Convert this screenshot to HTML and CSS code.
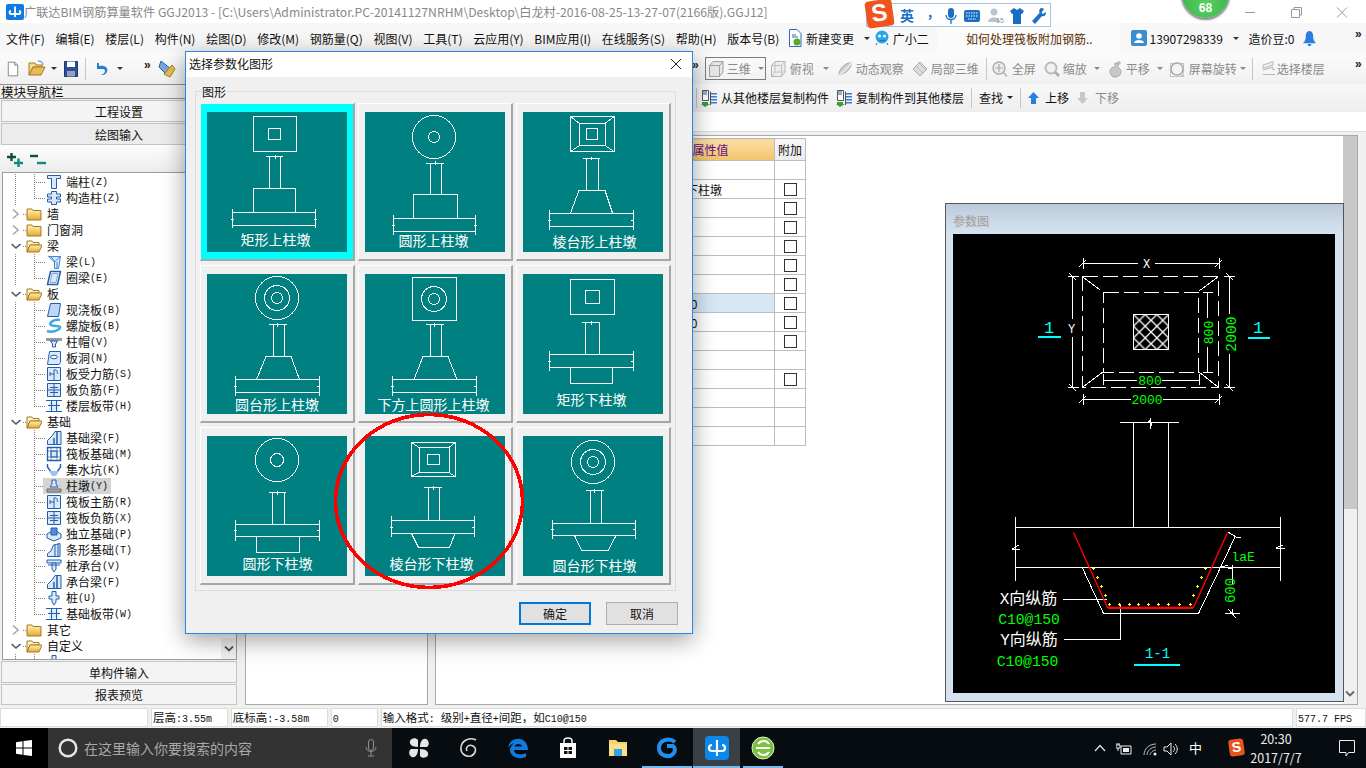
FILE: index.html
```html
<!DOCTYPE html>
<html lang="zh">
<head>
<meta charset="utf-8">
<title>广联达BIM钢筋算量软件 GGJ2013</title>
<link rel="stylesheet" href="styles.css">
</head>
<body>
<svg class="sprite" xmlns="http://www.w3.org/2000/svg">
  <defs>
    <linearGradient id="fold" x1="0" y1="0" x2="0" y2="1"><stop offset="0" stop-color="#fff3b8"/><stop offset="1" stop-color="#e2a92e"/></linearGradient>
  </defs>
  <symbol id="f-closed" viewBox="0 0 16 16"><path d="M1 3H6L7 4.500H15V14H1Z" fill="url(#fold)" stroke="#a87a1a"/></symbol>
  <symbol id="f-open" viewBox="0 0 16 16"><path d="M1 3H6L7 4.500H13V7H4L1 14Z" fill="#fff3c4" stroke="#a87a1a"/><path d="M1 14L4 7H16L13 14Z" fill="url(#fold)" stroke="#a87a1a"/></symbol>
  <symbol id="tw-r" viewBox="0 0 12 16"><path d="M3 3.500L8 8L3 12.500" fill="none" stroke="#a6a6a6" stroke-width="1.600"/></symbol>
  <symbol id="tw-d" viewBox="0 0 12 16"><path d="M1.500 6L6 10L10.500 6" fill="none" stroke="#555" stroke-width="1.600"/></symbol>
  <symbol id="i-duan" viewBox="0 0 16 16"><path d="M1.500 1.500H14.500V4.500H10.500V14.500H5.500V4.500H1.500Z" fill="#dbe8f9" stroke="#1f5fae"/></symbol>
  <symbol id="i-gz" viewBox="0 0 16 16"><path d="M5.500 1.500H10.500V4H14.500V7H10.500V9H14.500V12H10.500V14.500H5.500V12H1.500V9H5.500V7H1.500V4H5.500Z" fill="#dbe8f9" stroke="#1f5fae"/></symbol>
  <symbol id="i-liang" viewBox="0 0 16 16"><path d="M2.500 2.500H14.500L12.500 14.500H8.500V8Z" fill="#dbe8f9" stroke="#3f87d6"/><path d="M5 2.500L9 8M8.500 8L14.500 2.500M11 8V14" stroke="#3f87d6" fill="none"/></symbol>
  <symbol id="i-quan" viewBox="0 0 16 16"><path d="M4.500 1.500H14.500L11.500 14.500H1.500Z" fill="#fff" stroke="#1f5fae" stroke-width="1.500"/><path d="M6 3.500H12L10 12.500H4Z" fill="#dbe8f9" stroke="#7aa7dc"/></symbol>
  <symbol id="i-xj" viewBox="0 0 16 16"><path d="M4.500 1.500H14.500L12.500 14.500H1.500Z" fill="#bcd6f5" stroke="#1f5fae"/></symbol>
  <symbol id="i-lx" viewBox="0 0 16 16"><path d="M14 2C8 1 2 5 5 7C8 9 13 7 14 9C15 12 6 15 1 13" fill="none" stroke="#3fa6e8" stroke-width="2.500"/></symbol>
  <symbol id="i-zm" viewBox="0 0 16 16"><path d="M0 4H16V7H0Z" fill="#9a9a9a"/><path d="M4.500 7H11.500L9.500 10V13H6.500V10Z" fill="#dbe8f9" stroke="#1f5fae"/></symbol>
  <symbol id="i-bd" viewBox="0 0 16 16"><path d="M3.500 1.500H14.500V12.500L13 14.500H1.500Z" fill="#dbe8f9" stroke="#1f5fae"/><ellipse cx="8" cy="7" rx="3.500" ry="1.800" fill="#fff" stroke="#1f5fae"/></symbol>
  <symbol id="i-sl" viewBox="0 0 16 16"><path d="M1.500 1.500H14.500V14.500H1.500Z" fill="#dbe8f9" stroke="#1f5fae"/><path d="M8 4V14M4 8H8M4 6V10M8 4C11 3 12 6 11 8" fill="none" stroke="#1f5fae"/></symbol>
  <symbol id="i-fj" viewBox="0 0 16 16"><path d="M1.500 1.500H14.500V14.500H1.500Z" fill="#dbe8f9" stroke="#1f5fae"/><path d="M8 2V14M2 8H14M4 5.500H12M4 10.500H12" fill="none" stroke="#1f5fae"/></symbol>
  <symbol id="i-bdai" viewBox="0 0 16 16"><path d="M3 4H13V12H3Z" fill="#dbe8f9"/><path d="M0 2.500H16M0 13.500H16M2 7.500H14" stroke="#1f5fae" fill="none" stroke-width="1.200"/><path d="M5.500 2.500V13.500M10.500 2.500V13.500" stroke="#1f5fae" fill="none"/></symbol>
  <symbol id="i-jcl" viewBox="0 0 16 16"><path d="M1.500 14.500V10.500L6.500 5.500L9 1.500H15V14.500Z" fill="#dbe8f9" stroke="#1f5fae"/><path d="M8 14.500V8M11 1.500V14.500" stroke="#1f5fae" fill="none" stroke-width="1.500"/></symbol>
  <symbol id="i-fb" viewBox="0 0 16 16"><path d="M1.500 1.500H14.500V14.500H1.500Z" fill="#fff" stroke="#1f5fae" stroke-width="1.400"/><path d="M5 5H11V11H5Z" fill="#dbe8f9" stroke="#1f5fae"/><path d="M1 5H15M1 11H15M5 1V15M11 1V15" stroke="#1f5fae" fill="none" opacity=".6"/></symbol>
  <symbol id="i-jsk" viewBox="0 0 16 16"><path d="M1.500 2V5L5 10H11L14.500 5V2" fill="none" stroke="#1f5fae" stroke-width="1.400"/><path d="M3 9L6 14H10L13 9Z" fill="#9cc4ee"/></symbol>
  <symbol id="i-zd" viewBox="0 0 16 16"><path d="M6 2H10V6L12 9H4L6 6Z" fill="#dbe8f9" stroke="#1f5fae"/><path d="M1 11H15V14H1Z" fill="#a8a8a8" stroke="#666"/></symbol>
  <symbol id="i-dl" viewBox="0 0 16 16"><path d="M1 8L8 4L15 8V12L8 15L1 12Z" fill="#dbe8f9" stroke="#1f5fae"/><path d="M5 2H11V9H5Z" fill="#4f8fd8" stroke="#1f5fae"/></symbol>
  <symbol id="i-tx" viewBox="0 0 16 16"><path d="M1.500 14.500V11.500L5 9L7.500 3L14 1.500V14.500Z" fill="#dbe8f9" stroke="#1f5fae"/><path d="M9 3V14M12 2V14" stroke="#1f5fae" fill="none"/></symbol>
  <symbol id="i-zct" viewBox="0 0 16 16"><path d="M1 2H15V5H1Z" fill="#dbe8f9" stroke="#1f5fae"/><path d="M6 5H10V11L8 14L6 11Z" fill="#dbe8f9" stroke="#1f5fae"/><path d="M2 7H14" stroke="#1f5fae"/></symbol>
  <symbol id="i-z" viewBox="0 0 16 16"><path d="M6 1.500H10V6H13V9H10V12L8 15L6 12V9H3V6H6Z" fill="#dbe8f9" stroke="#1f5fae"/></symbol>
  <symbol id="g-cube" viewBox="0 0 16 18"><path d="M1.500 5.500L5 1.500H15V12L11.500 16.500H1.500Z" fill="#e6e6e6" stroke="#a0a0a0"/><path d="M1.500 5.500H11.500V16.500M11.500 5.500L15 1.500" fill="none" stroke="#a0a0a0"/></symbol>
  <symbol id="g-cube2" viewBox="0 0 16 18"><path d="M1.500 5.500L5 1.500H15V12L11.500 16.500H1.500Z" fill="#eee" stroke="#b5b5b5"/><path d="M1.500 5.500H11.500V16.500M11.500 5.500L15 1.500M5 1.500V12H15M5 12L1.500 16.500" fill="none" stroke="#c2c2c2"/></symbol>
  <symbol id="g-orbit" viewBox="0 0 16 18"><path d="M2 14C2 9 9 2 14 3C15 8 8 15 2 14Z" fill="#ccc" stroke="#aaa"/><path d="M1 16C4 14 12 7 15 2" stroke="#e8e8e8" stroke-width="2" fill="none"/></symbol>
  <symbol id="g-local" viewBox="0 0 16 18"><path d="M1 9L8 2L15 9L8 16Z" fill="#dcdcdc" stroke="#aaa"/><path d="M4 6L11 13M7 3L14 10" stroke="#bbb" fill="none"/></symbol>
  <symbol id="g-fit" viewBox="0 0 16 18"><circle cx="7" cy="8" r="6" fill="#eee" stroke="#aaa" stroke-width="1.400"/><path d="M7 4V12M3 8H11M11.500 12.500L15 16.500" stroke="#aaa" fill="none" stroke-width="1.200"/></symbol>
  <symbol id="g-zoom" viewBox="0 0 16 18"><circle cx="7" cy="8" r="5.500" fill="#f2f2f2" stroke="#bbb" stroke-width="2"/><path d="M11 12L15 16" stroke="#aaa" stroke-width="2.500" fill="none"/></symbol>
  <symbol id="g-pan" viewBox="0 0 16 18"><path d="M3 11C3 8 6 7 8 7V3H11V8C13 8 14 10 14 12C14 15 11 17 8 17C5 17 3 15 3 11Z" fill="#c8c8c8" stroke="#aaa"/><path d="M12 1V5M10 3H14" stroke="#aaa" fill="none"/></symbol>
  <symbol id="g-rot" viewBox="0 0 16 18"><rect x="1.500" y="3.500" width="13" height="13" fill="#f4f4f4" stroke="#c4c4c4"/><circle cx="8" cy="9" r="6" fill="none" stroke="#aaa" stroke-width="1.500"/><path d="M11 14L14 16" stroke="#aaa"/></symbol>
  <symbol id="g-floors" viewBox="0 0 16 18"><path d="M2 5L12 1.500V5L2 8.500ZM2 10L12 7V9.500H14M2 14.500H14" fill="#eee" stroke="#b8b8b8"/></symbol>
  <symbol id="b-copy" viewBox="0 0 16 18"><path d="M1.500 1.500H7.500V11.500H1.500Z" fill="#fff" stroke="#555"/><path d="M2 3H6M2 5H6" stroke="#1f5fae"/><path d="M1 13H7V15H9L4 18L0 15H1Z" fill="#3d9a3d"/><path d="M10 4H16V5.500H10ZM10 7H16V8.500H10ZM10 10H16V11.500H10ZM10 13H16V14.500H10Z" fill="#3a7bd5"/><path d="M9.500 2.500V16" stroke="#555"/></symbol>
</svg>

<header class="title">
  <svg class="app-ic" viewBox="0 0 18 16"><rect width="18" height="16" rx="2" fill="#0c7be2"/><path d="M9 2.500V13M5 7C3 7 3 10 5 10H13C15 10 15 7 13 7" stroke="#fff" stroke-width="1.800" fill="none"/></svg>
  <span class="title-t">广联达BIM钢筋算量软件 GGJ2013 - [C:\Users\Administrator.PC-20141127NRHM\Desktop\白龙村-2016-08-25-13-27-07(2166版).GGJ12]</span>
  <div class="win">
    <svg viewBox="0 0 46 20"><path d="M18 10.500H28" stroke="#9a9a9a"/></svg>
    <svg viewBox="0 0 46 20"><path d="M18.500 7.500H26.500V15.500H18.500ZM21 7.500V5.500H28.500V13H26.500" fill="none" stroke="#9a9a9a"/></svg>
    <svg viewBox="0 0 46 20"><path d="M18 5.500L28 15.500M28 5.500L18 15.500" stroke="#9a9a9a"/></svg>
  </div>
</header>

<nav class="menu">
  <span>文件(F)</span><span>编辑(E)</span><span>楼层(L)</span><span>构件(N)</span><span>绘图(D)</span><span>修改(M)</span><span>钢筋量(Q)</span><span>视图(V)</span><span>工具(T)</span><span>云应用(Y)</span><span>BIM应用(I)</span><span>在线服务(S)</span><span>帮助(H)</span><span>版本号(B)</span>
  <span class="mi-ic xin">
    <svg class="ic16" viewBox="0 0 16 18"><path d="M2.500 .500H10L14 4.500V17.500H2.500Z" fill="#fff" stroke="#2a6cc4"/><path d="M5 8H11M5 6H9" stroke="#2a6cc4"/><circle cx="10" cy="13" r="3.500" fill="#5aa832"/></svg>新建变更<i class="arr"></i>
  </span>
  <span class="mi-ic xiao">
    <svg class="ic16" viewBox="0 0 16 16"><circle cx="8" cy="7" r="6.500" fill="#2aa5e8"/><circle cx="5.500" cy="6" r="1.500" fill="#fff"/><circle cx="10.500" cy="6" r="1.500" fill="#fff"/><path d="M5 10Q8 12 11 10M3 13L2 15M13 13L14 15" stroke="#0f6fb5" fill="none"/></svg>广小二
  </span>
  <span class="notice">如何处理筏板附加钢筋..</span>
  <span class="mi-ic user">
    <svg class="ic16" viewBox="0 0 16 16"><rect width="16" height="16" rx="2" fill="#3a8ed0"/><circle cx="8" cy="6" r="2.800" fill="#fff"/><path d="M3 13C3 9 13 9 13 13Z" fill="#fff"/></svg>13907298339<i class="arr"></i>
  </span>
  <span class="dou">造价豆:0</span>
  <svg class="bell" viewBox="0 0 14 18"><path d="M7 1C4 1 3 4 3 7C3 10 2 12 0 14H14C12 12 11 10 11 7C11 4 10 1 7 1ZM5 15H9C9 18 5 18 5 15Z" fill="#2a7de1"/></svg>
  <span class="more">»</span>
</nav>

<div class="tb1">
  <div class="tb1-left">
    <svg class="tic new" viewBox="0 0 14 17"><path d="M1.500 .500H9L12.500 4V16.500H1.500Z" fill="#fff" stroke="#777"/><path d="M9 .500V4H12.500" fill="#ddd" stroke="#777"/></svg>
    <svg class="tic open" viewBox="0 0 18 17"><path d="M1 3H7L8 5H14V7H5L1 15Z" fill="#f5dc9a" stroke="#a87a1a"/><path d="M1 15L5 7H17L13 15Z" fill="#e8bc55" stroke="#a87a1a"/><path d="M10 1C13 1 15 2 15 5" stroke="#3a7bd5" fill="none"/></svg>
    <i class="arr a1"></i>
    <svg class="tic save" viewBox="0 0 14 16"><path d="M.500 .500H13.500V15.500H.500Z" fill="#2a4f9e" stroke="#1c3670"/><path d="M3 .500H11V6H3Z" fill="#fff"/><path d="M3 10H11V15.500H3Z" fill="#9a9fb5"/></svg>
    <i class="vsep s1"></i>
    <svg class="tic undo" viewBox="0 0 14 16"><path d="M3 2V8H9C12 8 12 13 6 14C13 15 15 9 12 6C10 4.500 7 4.500 5 5L5 2Z" fill="#2b7ad6"/></svg>
    <i class="arr a2"></i>
    <span class="more m1">»</span>
    <svg class="tic huit" viewBox="0 0 18 18"><path d="M3 1L13 9L9 15L1 7Z" fill="#7aa7dc" stroke="#2a5ea8"/><path d="M6 14L14 5L17 9L12 17Z" fill="#e8bc55" stroke="#a87a1a"/></svg>
  </div>
  <span class="more m2">»</span>
  <div class="boxed">
    <svg class="ic-g" viewBox="0 0 16 18"><use href="#g-cube"/></svg><span>三维</span><i class="arr g"></i>
  </div>
  <div class="tool t-fu"><svg class="ic-g" viewBox="0 0 16 18"><use href="#g-cube2"/></svg><span>俯视</span><i class="arr g"></i></div>
  <div class="tool t-dt"><svg class="ic-g" viewBox="0 0 16 18"><use href="#g-orbit"/></svg><span>动态观察</span></div>
  <div class="tool t-jb"><svg class="ic-g" viewBox="0 0 16 18"><use href="#g-local"/></svg><span>局部三维</span></div>
  <i class="vsep s2"></i>
  <div class="tool t-qp"><svg class="ic-g" viewBox="0 0 16 18"><use href="#g-fit"/></svg><span>全屏</span></div>
  <div class="tool t-sf"><svg class="ic-g" viewBox="0 0 16 18"><use href="#g-zoom"/></svg><span>缩放</span><i class="arr g"></i></div>
  <div class="tool t-py"><svg class="ic-g" viewBox="0 0 16 18"><use href="#g-pan"/></svg><span>平移</span><i class="arr g"></i></div>
  <div class="tool t-xz"><svg class="ic-g" viewBox="0 0 16 18"><use href="#g-rot"/></svg><span>屏幕旋转</span><i class="arr g"></i></div>
  <i class="vsep s3"></i>
  <div class="tool t-lc"><svg class="ic-g" viewBox="0 0 16 18"><use href="#g-floors"/></svg><span>选择楼层</span></div>
  <span class="more m3">»</span>
</div>

<main class="work">
  <aside class="nav">
    <div class="nav-title">模块导航栏</div>
    <button class="btn">工程设置</button>
    <button class="btn cur">绘图输入</button>
    <div class="nav-ic">
      <svg viewBox="0 0 16 14" class="pm"><path d="M0 4H9M4.500 0V8" stroke="#0b4f45" stroke-width="2.400" fill="none"/><path d="M7 10H16M11.500 5.500V14" stroke="#0e8c7a" stroke-width="2.400" fill="none"/></svg>
      <svg viewBox="0 0 16 14" class="pm"><path d="M0 3H8" stroke="#0b4f45" stroke-width="2.400" fill="none"/><path d="M7 10H16" stroke="#0e8c7a" stroke-width="2.400" fill="none"/></svg>
    </div>
    <div class="tree">
      <div class="tree-in">
        <div class="row l2"><svg class="ti"><use href="#i-duan"/></svg>端柱<span class="lat">(Z)</span></div>
        <div class="row l2 last"><svg class="ti"><use href="#i-gz"/></svg>构造柱<span class="lat">(Z)</span></div>
        <div class="row l1"><svg class="tw"><use href="#tw-r"/></svg><svg class="fd"><use href="#f-closed"/></svg>墙</div>
        <div class="row l1"><svg class="tw"><use href="#tw-r"/></svg><svg class="fd"><use href="#f-closed"/></svg>门窗洞</div>
        <div class="row l1"><svg class="tw"><use href="#tw-d"/></svg><svg class="fd"><use href="#f-open"/></svg>梁</div>
        <div class="row l2"><svg class="ti"><use href="#i-liang"/></svg>梁<span class="lat">(L)</span></div>
        <div class="row l2 last"><svg class="ti"><use href="#i-quan"/></svg>圈梁<span class="lat">(E)</span></div>
        <div class="row l1"><svg class="tw"><use href="#tw-d"/></svg><svg class="fd"><use href="#f-open"/></svg>板</div>
        <div class="row l2"><svg class="ti"><use href="#i-xj"/></svg>现浇板<span class="lat">(B)</span></div>
        <div class="row l2"><svg class="ti"><use href="#i-lx"/></svg>螺旋板<span class="lat">(B)</span></div>
        <div class="row l2"><svg class="ti"><use href="#i-zm"/></svg>柱帽<span class="lat">(V)</span></div>
        <div class="row l2"><svg class="ti"><use href="#i-bd"/></svg>板洞<span class="lat">(N)</span></div>
        <div class="row l2"><svg class="ti"><use href="#i-sl"/></svg>板受力筋<span class="lat">(S)</span></div>
        <div class="row l2"><svg class="ti"><use href="#i-fj"/></svg>板负筋<span class="lat">(F)</span></div>
        <div class="row l2 last"><svg class="ti"><use href="#i-bdai"/></svg>楼层板带<span class="lat">(H)</span></div>
        <div class="row l1"><svg class="tw"><use href="#tw-d"/></svg><svg class="fd"><use href="#f-open"/></svg>基础</div>
        <div class="row l2"><svg class="ti"><use href="#i-jcl"/></svg>基础梁<span class="lat">(F)</span></div>
        <div class="row l2"><svg class="ti"><use href="#i-fb"/></svg>筏板基础<span class="lat">(M)</span></div>
        <div class="row l2"><svg class="ti"><use href="#i-jsk"/></svg>集水坑<span class="lat">(K)</span></div>
        <div class="row l2"><span class="sel"><svg class="ti"><use href="#i-zd"/></svg>柱墩<span class="lat">(Y)</span></span></div>
        <div class="row l2"><svg class="ti"><use href="#i-sl"/></svg>筏板主筋<span class="lat">(R)</span></div>
        <div class="row l2"><svg class="ti"><use href="#i-fj"/></svg>筏板负筋<span class="lat">(X)</span></div>
        <div class="row l2"><svg class="ti"><use href="#i-dl"/></svg>独立基础<span class="lat">(P)</span></div>
        <div class="row l2"><svg class="ti"><use href="#i-tx"/></svg>条形基础<span class="lat">(T)</span></div>
        <div class="row l2"><svg class="ti"><use href="#i-zct"/></svg>桩承台<span class="lat">(V)</span></div>
        <div class="row l2"><svg class="ti"><use href="#i-jcl"/></svg>承台梁<span class="lat">(F)</span></div>
        <div class="row l2"><svg class="ti"><use href="#i-z"/></svg>桩<span class="lat">(U)</span></div>
        <div class="row l2 last"><svg class="ti"><use href="#i-bdai"/></svg>基础板带<span class="lat">(W)</span></div>
        <div class="row l1"><svg class="tw"><use href="#tw-r"/></svg><svg class="fd"><use href="#f-closed"/></svg>其它</div>
        <div class="row l1"><svg class="tw"><use href="#tw-d"/></svg><svg class="fd"><use href="#f-open"/></svg>自定义</div>
        <div class="row l2"><svg class="ti"><use href="#i-z"/></svg></div>
      </div>
      <span class="tree-down"><svg viewBox="0 0 10 8"><path d="M1 1.500L5 5.500L9 1.500" fill="none" stroke="#555" stroke-width="1.800"/></svg></span>
    </div>
    <button class="btn bot">单构件输入</button>
    <button class="btn bot2">报表预览</button>
  </aside>

  <section class="right">
    <div class="tb2">
      <i class="vsep s4"></i>
      <div class="tool2"><svg class="ic-g" viewBox="0 0 16 18"><use href="#b-copy"/></svg><span>从其他楼层复制构件</span></div>
      <div class="tool2"><svg class="ic-g" viewBox="0 0 16 18"><use href="#b-copy"/></svg><span>复制构件到其他楼层</span></div>
      <i class="vsep s5"></i>
      <div class="tool2 find"><span>查找</span><i class="arr k"></i></div>
      <i class="vsep s6"></i>
      <div class="tool2 up"><svg viewBox="0 0 11 12"><path d="M5.500 0L11 6H8V12H3V6H0Z" fill="#2a7de1"/></svg><span>上移</span></div>
      <div class="tool2 dn"><svg viewBox="0 0 11 12"><path d="M5.500 12L11 6H8V0H3V6H0Z" fill="#c8c8c8"/></svg><span>下移</span></div>
    </div>
    <div class="input-row"></div>
    <div class="panes">
      <div class="pane-a"></div>
      <div class="pane-b">
        <table class="props">
          <colgroup><col class="c1"><col class="c2"><col class="c3"><col class="c4"></colgroup>
          <thead><tr><th></th><th></th><th class="hv">属性值</th><th class="ha">附加</th></tr></thead>
          <tbody>
            <tr><td></td><td></td><td></td><td></td></tr>
            <tr><td></td><td></td><td class="val">棱台形下柱墩</td><td><i class="cb"></i></td></tr>
            <tr><td></td><td></td><td></td><td><i class="cb"></i></td></tr>
            <tr><td></td><td></td><td></td><td><i class="cb"></i></td></tr>
            <tr><td></td><td></td><td></td><td><i class="cb"></i></td></tr>
            <tr><td></td><td></td><td></td><td><i class="cb"></i></td></tr>
            <tr><td></td><td></td><td></td><td><i class="cb"></i></td></tr>
            <tr class="hl"><td></td><td></td><td class="val num">C10@150</td><td><i class="cb"></i></td></tr>
            <tr><td></td><td></td><td class="val num">C10@150</td><td><i class="cb"></i></td></tr>
            <tr><td></td><td></td><td></td><td><i class="cb"></i></td></tr>
            <tr><td></td><td></td><td></td><td></td></tr>
            <tr><td></td><td></td><td></td><td><i class="cb"></i></td></tr>
            <tr><td></td><td></td><td></td><td></td></tr>
            <tr><td></td><td></td><td></td><td></td></tr>
            <tr><td></td><td></td><td></td><td></td></tr>
          </tbody>
        </table>
        <div class="vs"><span class="vs-th"></span><svg viewBox="0 0 10 8"><path d="M1 1.500L5 5.500L9 1.500" fill="none" stroke="#666" stroke-width="1.800"/></svg></div>
      </div>
    </div>
  </section>
</main>

<footer class="status">
  <span class="st s-a"></span>
  <span class="st s-b">层高<span class="lat">:3.55m</span></span>
  <span class="st s-c">底标高<span class="lat">:-3.58m</span></span>
  <span class="st s-d"><span class="lat">0</span></span>
  <span class="st s-e">输入格式<span class="lat">: </span>级别<span class="lat">+</span>直径<span class="lat">+</span>间距，如<span class="lat">C10@150</span></span>
  <span class="st s-f"><span class="lat">577.7 FPS</span></span>
</footer>

<div class="task">
  <span class="start"><svg viewBox="0 0 16 16"><path d="M0 2.200L6.500 1.300V7.500H0ZM7.500 1.100L16 0V7.500H7.500ZM0 8.500H6.500V14.700L0 13.800ZM7.500 8.500H16V16L7.500 14.900Z" fill="#fff"/></svg></span>
  <div class="search">
    <svg class="cort" viewBox="0 0 20 20"><circle cx="10" cy="10" r="8.300" fill="none" stroke="#e6e6e6" stroke-width="2.400"/></svg>
    <span>在这里输入你要搜索的内容</span>
    <svg class="mic" viewBox="0 0 12 18"><rect x="3.500" y=".500" width="5" height="11" rx="2.500" fill="none" stroke="#8f8f8f"/><path d="M1 8C1 14 11 14 11 8M6 13V17M3 17H9" fill="none" stroke="#8f8f8f"/></svg>
  </div>
  <div class="tapps">
    <span class="tapp"><svg viewBox="0 0 22 22"><path d="M10 10C4 10 1 7 2 4C3 1 8 0 10 3ZM12 10C12 4 15 1 18 2C21 3 22 8 19 10ZM12 12C18 12 21 15 20 18C19 21 14 22 12 19ZM10 12C10 18 7 21 4 20C1 19 0 14 3 12Z" fill="#e6e6e6"/></svg></span>
    <span class="tapp"><svg viewBox="0 0 22 22"><path d="M18 3C12 0 4 3 3 10C2 17 8 20 13 19C18 17 19 11 15 9C11 7 7 10 9 14" fill="none" stroke="#d8d8d8" stroke-width="1.600"/></svg></span>
    <span class="tapp"><svg viewBox="0 0 22 22"><path d="M1 11C2 4 8 1 13 2C18 3 21 7 21 13H7C7 17 13 19 19 16V20C12 23 3 20 3 13C3 10 5 8 7 6C4 7 2 9 1 11ZM7.500 9.500H15C15 6 8 6 7.500 9.500Z" fill="#0f7cdd"/></svg></span>
    <span class="tapp"><svg viewBox="0 0 22 22"><path d="M3 6H19V21H3Z" fill="#fff"/><path d="M7 6V4C7 0 15 0 15 4V6" fill="none" stroke="#fff" stroke-width="1.500"/><path d="M7 10H10.500V13H7ZM11.500 10H15V13H11.500ZM7 14H10.500V17H7ZM11.500 14H15V17H11.500Z" fill="#111"/></svg></span>
    <span class="tapp"><svg viewBox="0 0 22 22"><path d="M2 3H9L11 5H20V19H2Z" fill="#f6d365"/><path d="M2 7H20V19H2Z" fill="#fbe08a"/><path d="M7 12H15V19H7Z" fill="#2fa3e6"/></svg></span>
    <span class="tapp act1"><svg viewBox="0 0 24 24"><path d="M20 6C14 1 4 4 4 12C4 20 14 22 18 18C21 15 20 11 18 10H12" stroke="#1f8ff0" stroke-width="4" fill="none"/></svg></span>
    <span class="tapp act2"><svg viewBox="0 0 24 24"><rect width="24" height="24" rx="4" fill="#0c87ea"/><path d="M12 4V20M7 9C3 9 3 15 7 15H17C21 15 21 9 17 9" stroke="#fff" stroke-width="2.200" fill="none"/></svg></span>
    <span class="tapp act3"><svg viewBox="0 0 24 24"><circle cx="12" cy="12" r="11" fill="#7ac142" stroke="#d8f0c0"/><path d="M5 12H19M7 8C10 4 16 4 18 8M7 16C10 20 16 20 18 16" stroke="#fff" stroke-width="2" fill="none"/></svg></span>
  </div>
  <div class="tray">
    <svg class="tr-a" viewBox="0 0 12 8"><path d="M1 7L6 1.500L11 7" fill="none" stroke="#ddd" stroke-width="1.300"/></svg>
    <svg class="tr-b" viewBox="0 0 16 12"><path d="M5 3H15V11H5Z" fill="none" stroke="#eee"/><path d="M7 5H13V9H7Z" fill="#eee"/><path d="M0 2H4V5H0ZM1 0V2M3 0V2M2 5V8" stroke="#eee" fill="none"/></svg>
    <svg class="tr-c" viewBox="0 0 16 14"><path d="M2 13C2 7 7 2 14 2M5 13C5 9 9 5 14 5M8 13C8 11 11 8 14 8" stroke="#bbb" fill="none"/><circle cx="13" cy="12" r="1.500" fill="#eee"/></svg>
    <svg class="tr-d" viewBox="0 0 16 14"><path d="M1 5H4L8 1V13L4 9H1Z" fill="none" stroke="#eee"/><path d="M10 4C12 6 12 8 10 10M12 2C15 5 15 9 12 12" stroke="#eee" fill="none"/></svg>
    <span class="zh">中</span>
    <span class="sg-s">S</span>
    <span class="clock">20:30<br>2017/7/7</span>
    <svg class="tr-n" viewBox="0 0 16 17"><path d="M.500 .500H15.500V12.500H9.500L7 16V12.500H.500Z" fill="none" stroke="#eee"/></svg>
  </div>
</div>

<!-- floating: Sogou IME bar -->
<div class="sogou">
  <span class="sg-logo">S</span>
  <span class="sg-zh">英</span>
  <span class="sg-p">,</span>
  <svg viewBox="0 0 12 16" class="sgi sg1"><rect x="3" y="0" width="6" height="10" rx="3" fill="#1a6fc4"/><path d="M1 7C1 13 11 13 11 7M6 12V16" stroke="#1a6fc4" fill="none" stroke-width="1.300"/></svg>
  <svg viewBox="0 0 16 12" class="sgi sg2"><rect width="16" height="12" rx="2" fill="#1a6fc4"/><path d="M2 3H14M2 6H14M4 9H12" stroke="#fff" stroke-dasharray="1.500 1"/></svg>
  <svg viewBox="0 0 16 16" class="sgi sg3"><circle cx="6" cy="4" r="3.500" fill="#b8c4d0"/><path d="M0 14C0 8 12 8 12 14Z" fill="#b8c4d0"/><text x="8" y="15" class="sg-15">15</text></svg>
  <svg viewBox="0 0 14 16" class="sgi sg4"><path d="M4 0L7 2L10 0L14 3L12 6H11V16H3V6H2L0 3Z" fill="#1a6fc4"/></svg>
  <svg viewBox="0 0 14 16" class="sgi sg5"><path d="M9 0C7 1 7 3 7.500 5L0 13L3 16L10 8C12 9 14 8 14 4L11 6L9.500 4.500L12 1C11 0 10 0 9 0Z" fill="#1a6fc4"/></svg>
</div>
<div class="gauge"><span>68</span></div>

<!-- floating: parameter picture window -->
<div class="param">
  <div class="param-t">参数图</div>
  <svg class="cad" viewBox="953 234 382 459" xmlns="http://www.w3.org/2000/svg">
    <defs>
      <pattern id="hatch" x="1133.500" y="314.500" width="11.700" height="11.700" patternUnits="userSpaceOnUse"><path d="M0 0L11.700 11.700M11.700 0L0 11.700" stroke="#fff" stroke-width="1.300" fill="none"/></pattern>
    </defs>
    <g class="w">
      <path d="M1083 263.500H1138M1155 263.500H1219M1083 258V269M1219 258V269M1079 267L1086 260M1215 267L1222 260"/>
      <rect x="1082.500" y="276.500" width="136" height="111" stroke-dasharray="15 5"/>
      <rect x="1103.500" y="292.500" width="95" height="80" stroke-dasharray="15 5"/>
      <path d="M1083 277L1100 290M1218 277L1199 291M1083 387L1103 372M1218 387L1199 372"/>
      <rect x="1133.500" y="314.500" width="35" height="35" fill="url(#hatch)"/>
      <path d="M1072.500 276V319M1072.500 337V388M1068 276.500H1079M1068 387.500H1079M1069 273L1076 280M1069 384L1076 391"/>
      <path d="M1229.500 276V314M1229.500 354V388M1224 276.500H1235M1224 387.500H1235M1226 273L1233 280M1226 384L1233 391"/>
      <path d="M1207.500 293V318M1207.500 347V372M1203 292.500H1213M1203 372.500H1213"/>
      <path d="M1103 380.500H1137M1162 380.500H1199M1103 374V385M1199 374V385"/>
      <path d="M1083 399.500H1131M1163 399.500H1219M1083 394V405M1219 394V405M1079 403L1086 396M1215 403L1222 396"/>
      <path d="M1120 422.500H1179M1148 423L1150 420L1150 429L1152 423M1133.500 422V527M1168.500 422V527"/>
      <path d="M1016 527.500H1280M1016 567.500H1280M1015.500 517V581M1280.500 517V581M1012 549H1020M1276 548H1285M1012 549L1019 545M1276 548L1283 545"/>
      <path d="M1082 567L1103.500 613.500H1198.500L1235 537"/>
      <path d="M1228 532L1236 537L1241 537M1220 568L1228 565M1220 566L1232 569M1232.500 565V584M1232.500 609V614M1225 613.500H1240M1228 609L1236 618"/>
      <path d="M1063 599.500H1107M1064 639.500H1120.500V604"/>
    </g>
    <path class="r" d="M1073.500 532.500L1107.500 607.500H1193.500L1227.500 532.500"/>
    <path class="r2" d="M1108 607.500H1193"/>
    <g class="y">
      <path d="M1107.500 604.500h3M1109 603v3M1117.500 604.500h3M1119 603v3M1127.500 604.500h3M1129 603v3M1136.500 604.500h3M1138 603v3M1146.500 604.500h3M1148 603v3M1156.500 604.500h3M1158 603v3M1166.500 604.500h3M1168 603v3M1177.500 604.500h3M1179 603v3M1188.500 604.500h3M1190 603v3"/>
      <path d="M1091.500 568.500h3M1093 567v3M1095.500 577.500h3M1097 576v3M1099.500 586.500h3M1101 585v3M1103.500 595.500h3M1105 594v3M1203.500 568.500h3M1205 567v3M1199.500 577.500h3M1201 576v3M1195.500 586.500h3M1197 585v3M1191.500 595.500h3M1193 594v3"/>
    </g>
    <g class="c">
      <path d="M1038 336.500H1061M1248 337.500H1270M1134 665H1180"/>
    </g>
    <text class="cw t12" x="1146.500" y="268">X</text>
    <text class="cw t12" x="1071.500" y="333">Y</text>
    <text class="cg t13" x="1150" y="385">800</text>
    <text class="cg t13" x="1147" y="404">2000</text>
    <text class="cg t15" transform="translate(1236 334) rotate(-90)">2000</text>
    <text class="cg t13" transform="translate(1213 332.500) rotate(-90)">800</text>
    <text class="cc t17" x="1049" y="333">1</text>
    <text class="cc t17" x="1258" y="333">1</text>
    <text class="cg t13 left" x="1231.500" y="561">laE</text>
    <text class="cg t14" transform="translate(1235 590.500) rotate(-90)">600</text>
    <text class="cw t16" x="1028.500" y="603.500">X向纵筋</text>
    <text class="cg t15" x="1029" y="623.500">C10@150</text>
    <text class="cw t16" x="1029" y="644.500">Y向纵筋</text>
    <text class="cg t15" x="1027.500" y="666">C10@150</text>
    <text class="cc t14" x="1157.500" y="658">1-1</text>
  </svg>
</div>

<!-- floating: modal dialog -->
<div class="dlg">
  <div class="dlg-t"><span>选择参数化图形</span><svg viewBox="0 0 12 12"><path d="M1 1L11 11M11 1L1 11" stroke="#222" fill="none"/></svg></div>
  <fieldset class="grp">
    <legend>图形</legend>
    <div class="grid">
      <div class="cell on"><svg class="fig" viewBox="0 0 140 140">
        <path d="M46.500 4.500H89V39.500H46.500ZM61.500 16.500H73V27.500H61.500ZM58.500 44.500H76M68 43V47M62.500 44.500V76.500M73.500 44.500V76.500M46.500 100.500V76.500H88.500V100.500M26 100.500H108.500M26 113.500H108.500M25.500 97V116M108.500 97V116M24 107H27M107 107H110"/>
        <text x="68.500" y="133">矩形上柱墩</text></svg></div>
      <div class="cell"><svg class="fig" viewBox="0 0 140 140">
        <circle cx="69" cy="25" r="21.500"/><circle cx="69" cy="25" r="5.500"/>
        <path d="M60.500 51H79M70 49V53M65 51V82.500M76 51V82.500M48.500 106.500V82.500H92V106.500M28.500 106.500H111M28.500 119.500H111M28.500 103V123M110.500 103V123M27 113H30M109 113H112"/>
        <text x="68.500" y="134">圆形上柱墩</text></svg></div>
      <div class="cell"><svg class="fig" viewBox="0 0 140 140">
        <path d="M47.500 4.500H91V39.500H47.500ZM56.500 11.500H82V33.500H56.500ZM63.500 16.500H74.500V27.500H63.500ZM47.500 4.500L56.500 11.500M91 4.500L82 11.500M47.500 39.500L56.500 33.500M91 39.500L82 33.500M60 46.500H77M68 45V48M63.500 46.500V78.500M75 46.500V78.500M47.500 101L56 78.500H82L89.500 101M26.500 101.500H110M26.500 114.500H110M26.500 98V118M110 98V118M25 108H28M108 108H111"/>
        <text x="71.500" y="135">棱台形上柱墩</text></svg></div>
      <div class="cell"><svg class="fig" viewBox="0 0 140 140">
        <circle cx="70" cy="24" r="21.500"/><circle cx="70" cy="24" r="12.500"/><circle cx="70" cy="24" r="5.500"/>
        <path d="M61.500 50.500H80M70 48.500V53M66 50.500V82.500M77 50.500V82.500M49.500 105.500L59 82.500H84L92.500 105.500M28.500 105.500H112M28.500 118.500H112M28.500 102V122M112 102V122M27 112H30M110 112H113"/>
        <text x="70" y="136">圆台形上柱墩</text></svg></div>
      <div class="cell"><svg class="fig" viewBox="0 0 140 140">
        <circle cx="69" cy="25" r="12.500"/><circle cx="69" cy="25" r="5.500"/>
        <path d="M47.500 3.500H91V46.500H47.500ZM60.500 50.500H79M69 48.500V53M65 50.500V82.500M76 50.500V82.500M49 105.500L58 82.500H83L92 105.500M27.500 105.500H111M27.500 118.500H111M27.500 102V122M111 102V122M26 112H29M109 112H112"/>
        <text x="68.500" y="136">下方上圆形上柱墩</text></svg></div>
      <div class="cell"><svg class="fig" viewBox="0 0 140 140">
        <path d="M47.500 5.500H91V40.500H47.500ZM62.500 16.500H76V29.500H62.500ZM59 48.500H77M68 46.500V51M62.500 48.500V80.500M76 48.500V80.500M26.500 80.500H110M26.500 93.500H110M26.500 77V97M110 77V97M25 87H28M108 87H111M47.500 93.500V109.500H89.500V93.500"/>
        <text x="68.500" y="131">矩形下柱墩</text></svg></div>
      <div class="cell"><svg class="fig" viewBox="0 0 140 140">
        <circle cx="70" cy="24" r="21.500"/><circle cx="70" cy="24" r="6.500"/>
        <path d="M61.500 56.500H79M70 54.500V59M65 56.500V88.500M77.500 56.500V88.500M28.500 88.500H112M28.500 100.500H112M28.500 84V105M112 84V105M27 94H30M110 94H113M49.500 100.500V116.500H92V100.500"/>
        <text x="70.500" y="133">圆形下柱墩</text></svg></div>
      <div class="cell"><svg class="fig" viewBox="0 0 140 140">
        <path d="M46.500 6.500H90V40.500H46.500ZM54 11.500H84V36.500H54ZM62.500 18.500H74V28.500H62.500ZM46.500 6.500L54 11.500M90 6.500L84 11.500M46.500 40.500L54 36.500M90 40.500L84 36.500M58.500 51.500H77M68 49.500V54M63 51.500V84.500M74 51.500V84.500M26.500 84.500H109M26.500 97.500H109M26.500 80V101M109 80V101M25 91H28M107 91H110M46.500 97.500L53.500 111.500H84.500L90 97.500"/>
        <text x="66.500" y="133">棱台形下柱墩</text></svg></div>
      <div class="cell"><svg class="fig" viewBox="0 0 140 140">
        <circle cx="70" cy="26" r="21.500"/><circle cx="70" cy="26" r="12.500"/><circle cx="70" cy="26" r="5.500"/>
        <path d="M62.500 54.500H80.500M71 52.500V57M67 54.500V87.500M78 54.500V87.500M29.500 87.500H112M29.500 99.500H112M29.500 84V103M112 84V103M28 93H31M110 93H113M51.500 99.500L58.500 114H85.500L93 99.500"/>
        <text x="71.500" y="135">圆台形下柱墩</text></svg></div>
    </div>
  </fieldset>
  <div class="dlg-b"><button class="ok">确定</button><button class="no">取消</button></div>
</div>

<!-- annotation drawn over the screenshot -->
<svg class="ring" viewBox="0 0 194 182"><ellipse cx="97" cy="91" rx="93.500" ry="86.500" fill="none" stroke="#f00" stroke-width="3.600"/></svg>
</body>
</html>
```
FILE: styles.css
```css
* { box-sizing: border-box; }
html, body { margin: 0; padding: 0; }
body {
  width: 1366px; height: 768px; overflow: hidden; position: relative;
  display: flex; flex-direction: column;
  font: 12px "Noto Sans CJK SC", "Liberation Sans", sans-serif; color: #111; background: #f0f0f0;
}
.sprite { width: 0; height: 0; flex: none; overflow: hidden; }
i { display: block; font-style: normal; }
button { font: inherit; color: inherit; margin: 0; padding: 0; }
.lat { font: 10px "Liberation Mono", monospace; }

/* title */
.title { height: 23px; flex: none; background: #fff; display: flex; align-items: center; padding-left: 6px; color: #888; position: relative; }
.app-ic { width: 18px; height: 16px; flex: none; }
.title-t { font-size: 12.200px; white-space: nowrap; }
.win { margin-left: auto; display: flex; width: 139px; height: 20px; }
.win svg { width: 46px; height: 20px; }

/* menu */
.menu { height: 30px; flex: none; background: #f7f7f7; display: flex; align-items: center; padding-left: 6px; gap: 10.700px; white-space: nowrap; position: relative; }
.menu > span { flex: none; }
.mi-ic { display: flex; align-items: center; gap: 3px; }
.ic16 { width: 16px; height: 18px; flex: none; }
.arr { width: 0; height: 0; border: 3px solid transparent; border-top: 3px solid #333; border-bottom: 0; flex: none; }
.arr.g { border-top-color: #888; }
.mi-ic .arr { margin-left: 7px; }
.menu .xin { margin-left: -3px; }
.menu .xiao { margin-left: -7px; }
.notice { background: #fbfbfb; color: #5a2d00; align-self: stretch; display: flex; align-items: center; width: 183px; padding-left: 29px; margin-left: -2.500px; }
.more { font: bold 12px "Liberation Sans", sans-serif; color: #222; }
.menu .more { position: absolute; left: 1355px; top: 4px; }
.menu .dou { margin-left: -1px; }
.bell { width: 13px; height: 17px; flex: none; margin-left: -2px; }

/* toolbar 1 */
.tb1 { height: 31px; flex: none; display: flex; align-items: center; background: linear-gradient(#fcfcfc, #f0f0f0); color: #8a8a8a; position: relative; }
.tb1-left { width: 690px; display: flex; align-items: center; position: relative; height: 100%; padding-left: 7px; flex: none; }
.tic { flex: none; }
.new { width: 12px; height: 16px; }
.open { width: 18px; height: 17px; margin-left: 9px; }
.a1 { margin-left: 5px; }
.save { width: 14px; height: 16px; margin-left: 7px; }
.s1 { margin-left: 7px; }
.vsep { width: 1px; height: 22px; background: #c6c6c6; flex: none; }
.undo { width: 14px; height: 16px; margin-left: 8px; }
.a2 { margin-left: 9px; }
.m1 { margin-left: 21px; margin-bottom: 8px; }
.huit { width: 18px; height: 18px; margin-left: 7px; }
.tb1 .m2 { margin-left: 2px; margin-bottom: 8px; }
.boxed { width: 61px; height: 23px; margin-left: 6px; border: 1px solid #7c7c7c; display: flex; align-items: center; padding-left: 2px; flex: none; }
.ic-g { width: 16px; height: 18px; flex: none; }
.boxed span { margin-left: 3px; }
.boxed .arr { margin-left: 7px; }
.tool { display: flex; align-items: center; gap: 3px; flex: none; }
.t-fu { margin-left: 4px; gap: 4px; }
.t-fu .arr { margin-left: 5px; }
.t-dt { margin-left: 8px; }
.t-jb { margin-left: 8px; }
.s2 { margin-left: 7px; }
.t-qp { margin-left: 5px; gap: 4px; }
.t-sf { margin-left: 8px; }
.t-sf .arr { margin-left: 4px; }
.t-py { margin-left: 7px; }
.t-py .arr { margin-left: 4px; }
.t-xz { margin-left: 6px; gap: 4px; }
.t-xz .arr { margin-left: -1px; }
.s3 { margin-left: 6px; }
.t-lc { margin-left: 8px; gap: 0; }
.tb1 .m3 { position: absolute; left: 1355px; top: 4px; }

/* work area */
.work { height: 624px; flex: none; display: flex; }
.nav { width: 238px; flex: none; display: flex; flex-direction: column; border-top: 1px solid #909090; }
.nav-title { height: 14px; font-size: 12.500px; line-height: 14px; border-bottom: 1px solid #909090; padding-left: 1px; background: #f0f0f0; flex: none; }
.btn { height: 22px; flex: none; margin: 1px 1px 0; width: 236px; background: #f4f4f4; border: 1px solid #c4c4c4; display: block; text-align: center; }
.cur { background: #ececec; }
.bot2 { height: 21px; }
.nav-ic { height: 27px; flex: none; display: flex; align-items: center; gap: 7px; padding: 3px 0 0 7px; background: linear-gradient(#fdfdfd, #ececec); }
.pm { width: 16px; height: 14px; }
.tree { height: 488px; flex: none; margin-left: 2px; width: 235px; border: 1px solid #9c9c9c; background: #fff; position: relative; overflow: hidden; }
.tree-in { padding-top: 1px; }
.tree-down { position: absolute; right: 0; bottom: 0; width: 15px; height: 21px; background: #f0f0f0; display: flex; align-items: center; justify-content: center; }
.tree-down svg { width: 10px; height: 8px; }
.row { height: 16px; display: flex; align-items: center; white-space: nowrap; line-height: 16px; }
.l1 { padding-left: 7px; background: repeating-linear-gradient(90deg, #808080 0 1px, transparent 1px 2px) 20px 8px / 3px 1px no-repeat; }
.l2 {
  padding-left: 43px;
  background:
    repeating-linear-gradient(#808080 0 1px, transparent 1px 2px) 12px 0 / 1px 100% no-repeat,
    repeating-linear-gradient(#808080 0 1px, transparent 1px 2px) 31px 0 / 1px 100% no-repeat,
    repeating-linear-gradient(90deg, #808080 0 1px, transparent 1px 2px) 31px 8px / 11px 1px no-repeat;
}
.last {
  background:
    repeating-linear-gradient(#808080 0 1px, transparent 1px 2px) 12px 0 / 1px 100% no-repeat,
    repeating-linear-gradient(#808080 0 1px, transparent 1px 2px) 31px 0 / 1px 9px no-repeat,
    repeating-linear-gradient(90deg, #808080 0 1px, transparent 1px 2px) 31px 8px / 11px 1px no-repeat;
}
.ti { width: 16px; height: 16px; margin-right: 4px; flex: none; }
.tw { width: 12px; height: 16px; flex: none; }
.fd { width: 16px; height: 16px; margin: 0 5px 0 4px; flex: none; }
.sel { display: flex; align-items: center; background: #d4d4d4; margin-left: -3px; padding: 0 3px; height: 16px; }

/* right side */
.right { flex: 1; display: flex; flex-direction: column; min-width: 0; padding-bottom: 3px; }
.tb2 { height: 28px; flex: none; display: flex; align-items: center; padding: 0 0 1px 458px; background: linear-gradient(#f8f8f8, #eeeeee); }
.s4 { height: 20px; margin-right: 4px; }
.tool2 { display: flex; align-items: center; gap: 4px; flex: none; margin-right: 7px; }
.s5 { height: 20px; margin-right: 7px; }
.s6 { height: 20px; margin-right: 7px; }
.find { gap: 4px; margin-right: 7px; }
.arr.k { border-top-color: #222; }
.up svg, .dn svg { width: 11px; height: 12px; }
.up { gap: 6px; margin-right: 8px; }
.dn { gap: 7px; color: #8a8a8a; }
.input-row { height: 20px; flex: none; background: #fff; border-bottom: 1px solid #dcdcdc; }
.panes { flex: 1; display: flex; padding-left: 7px; padding-top: 3px; min-height: 0; }
.pane-a { width: 183px; flex: none; background: #fff; border: 1px solid #a8a8a8; }
.pane-b { width: 923px; flex: none; margin-left: 7px; background: #fff; border: 1px solid #a8a8a8; display: flex; justify-content: space-between; position: relative; }
.props { border-collapse: collapse; table-layout: fixed; width: 369px; height: 0; margin-top: 2px; }
.c1 { width: 60px; } .c2 { width: 150px; } .c3 { width: 128px; } .c4 { width: 31px; }
.props th, .props td { border: 1px solid #bcbcbc; padding: 0 0 0 3px; font-weight: 400; white-space: nowrap; overflow: hidden; }
.props thead tr { height: 22px; }
.props tbody tr { height: 19px; }
.props td:last-child { padding: 0; }
.props .val { padding-left: 3px; }
.props .num { padding-left: 0; text-indent: -2px; }
.props .hv { background: linear-gradient(#fbdea8, #f2c46a); color: #6a0a88; font-size: 12px; text-align: center; padding: 0; }
.props .ha { background: linear-gradient(#f8f8f8, #ececec); text-align: center; padding: 0; }
.hl td { background: #d6e8f6; }
.hl td:last-child { background: #fff; }
.cb { width: 13px; height: 13px; border: 1px solid #333; margin: 0 auto; background: #fff; }
.vs { width: 14px; flex: none; background: #f0f0f0; display: flex; flex-direction: column; justify-content: space-between; align-items: center; padding-bottom: 6px; }
.vs-th { width: 14px; height: 373px; background: #c8c8c8; display: block; }
.vs svg { width: 10px; height: 8px; }

/* status */
.status { height: 20px; flex: none; display: flex; gap: 3px; background: #f0f0f0; }
.st { height: 19px; background: #fff; border: 1px solid #dcdcdc; line-height: 17px; padding-left: 1px; white-space: nowrap; font-size: 11.500px; }
.s-a { width: 148px; } .s-b { width: 77px; } .s-c { width: 97px; } .s-d { width: 47px; } .s-e { width: 913px; } .s-f { width: 70px; }

/* taskbar */
.task { height: 40px; flex: none; background: #070c10; display: flex; color: #eee; position: relative; }
.start { width: 48px; background: #000; display: flex; align-items: center; justify-content: center; }
.start svg { width: 16px; height: 16px; }
.search { width: 344px; background: #333; display: flex; align-items: center; padding-left: 10px; color: #a8a8a8; font-size: 14px; position: relative; }
.cort { width: 20px; height: 20px; margin-right: 6px; }
.mic { width: 12px; height: 18px; position: absolute; left: 317px; top: 11px; }
.tapps { display: flex; margin-left: 2px; }
.tapp { width: 49.700px; height: 40px; display: flex; align-items: center; justify-content: center; flex: none; }
.tapp svg { width: 22px; height: 22px; }
.tapp.act1 { box-shadow: inset 0 -2px 0 #76b9ed; }
.tapp.act1 svg { width: 24px; height: 24px; }
.tapp.act2 { background: #3a4044; box-shadow: inset 0 -2px 0 #76b9ed; width: 47px; margin-left: 1px; margin-right: 3px; }
.tapp.act2 svg { width: 24px; height: 26px; }
.tapp.act3 { box-shadow: inset 0 -2px 0 #76b9ed; width: 40px; }
.tapp.act3 svg { width: 24px; height: 24px; }
.tray { position: absolute; inset: 0 0 0 auto; width: 276px; }
.tray > * { position: absolute; }
.tr-a { left: 4px; top: 16px; width: 12px; height: 8px; }
.tr-b { left: 26px; top: 15px; width: 16px; height: 12px; }
.tr-c { left: 52px; top: 14px; width: 16px; height: 14px; }
.tr-d { left: 73px; top: 14px; width: 16px; height: 14px; }
.zh { left: 99px; top: 10px; font-size: 13px; color: #fff; line-height: 20px; }
.sg-s { left: 139px; top: 11px; width: 15px; height: 17px; background: #e8541e; color: #fff; font: bold 14px/17px "Liberation Sans", sans-serif; text-align: center; border-radius: 3px; transform: rotate(-8deg); }
.clock { left: 146px; top: 1px; width: 80px; text-align: center; font-size: 12.500px; line-height: 19px; color: #eee; }
.tr-n { left: 249px; top: 12px; width: 16px; height: 17px; }

/* overlays */
.sogou { position: absolute; left: 866px; top: 3px; width: 185px; height: 24px; background: #fff; border: 1px solid #a6c4dc; display: block; }
.sogou > * { position: absolute; }
.sg-logo { left: -1px; top: -4px; width: 27px; height: 27px; background: #f0541e; color: #fff; font: bold 24px/26px "Liberation Sans", sans-serif; text-align: center; border-radius: 4px; transform: rotate(-8deg); }
.sg-zh { left: 33px; top: 2px; color: #1a6fc4; font-size: 14px; font-weight: 700; line-height: 18px; }
.sg-p { left: 61px; top: -1px; color: #1a6fc4; font-size: 13px; font-weight: 700; line-height: 18px; }
.sgi { top: 4px; height: 16px; }
.sg1 { left: 78px; width: 12px; }
.sg2 { left: 97px; width: 16px; top: 6px; height: 12px; }
.sg3 { left: 121px; width: 16px; }
.sg-15 { font: 7px "Liberation Sans", sans-serif; fill: #8a98a6; }
.sg4 { left: 143px; width: 14px; }
.sg5 { left: 165px; width: 14px; }
.gauge { position: absolute; left: 1182px; top: -29px; width: 47px; height: 47px; border-radius: 50%; background: radial-gradient(circle at 50% 70%, #58d060, #2ea545); box-shadow: 0 1px 2px 1px #888; display: flex; align-items: flex-end; justify-content: center; }
.gauge span { color: #fff; font: 700 12px/14px "Liberation Sans", sans-serif; margin-bottom: 3px; }

.param { position: absolute; left: 945px; top: 203px; width: 399px; height: 499px; border: 1px solid #555; background: linear-gradient(#bccbdb, #d5e3f1 30px, #d5e3f1); padding: 30px 8px 0 7px; }
.param-t { position: absolute; left: 7px; top: 9px; color: #a0a0a0; font-size: 12px; line-height: 16px; text-shadow: 1px 1px 0 #cfcfcf; }
.cad { width: 382px; height: 459px; display: block; background: #000; }
.cad .w { fill: none; stroke: #fff; stroke-width: 1; shape-rendering: crispEdges; }
.cad .r { fill: none; stroke: #f00; stroke-width: 1.400; }
.cad .r2 { fill: none; stroke: #f00; stroke-width: 2; shape-rendering: crispEdges; }
.cad .y { fill: none; stroke: #ff0; stroke-width: 1; shape-rendering: crispEdges; }
.cad .c { fill: none; stroke: #0ff; stroke-width: 2; shape-rendering: crispEdges; }
.cad text { text-anchor: middle; font-family: "Liberation Mono", "Noto Sans CJK SC", monospace; }
.cad .left { text-anchor: start; }
.cw { fill: #fff; } .cg { fill: #0f0; } .cc { fill: #0ff; }
.t12 { font-size: 12px; } .t13 { font-size: 13px; } .t14 { font-size: 14px; } .t15 { font-size: 14.700px; } .t16 { font-size: 16px; } .t17 { font-size: 17px; }

.dlg { position: absolute; left: 185px; top: 51px; width: 508px; height: 583px; border: 1px solid #2a86e8; background: #f0f0f0; box-shadow: 0 6px 22px rgba(0, 0, 0, .38); display: flex; flex-direction: column; }
.dlg-t { height: 25px; flex: none; background: #fff; display: flex; align-items: center; justify-content: space-between; padding: 0 10px 2px 3px; }
.dlg-t svg { width: 12px; height: 12px; }
.grp { margin: 7px 0 0 9px; width: 481px; height: 507px; border: 1px solid #dcdcdc; padding: 0 0 0 4px; flex: none; }
.grp legend { padding: 0 1px; margin-left: 1px; line-height: 15px; font-size: 12px; }
.grid { display: grid; grid-template-columns: repeat(3, 155px); grid-auto-rows: 158px; gap: 4px 3px; margin-top: 4px; }
.cell { background: #f0f0f0; border-style: solid; border-color: #fff #a6a6a6 #a6a6a6 #fff; border-width: 1px 2px 2px 1px; padding: 8px 0 0 6px; }
.cell.on { background: #0ff; border-color: #f0f0f0 #a6a6a6 #a6a6a6 #f0f0f0; }
.fig { width: 140px; height: 140px; display: block; background: #008080; }
.fig path, .fig circle { fill: none; stroke: #fff; stroke-width: 1; shape-rendering: crispEdges; }
.fig text { fill: #fff; font-size: 14px; text-anchor: middle; }
.dlg-b { display: flex; gap: 15px; padding: 11px 0 0 333px; }
.ok, .no { width: 72px; height: 23px; background: #e1e1e1; border: 1px solid #adadad; }
.ok { border: 2px solid #0078d7; }

.ring { position: absolute; left: 332px; top: 410px; width: 194px; height: 182px; shape-rendering: crispEdges; }
```
